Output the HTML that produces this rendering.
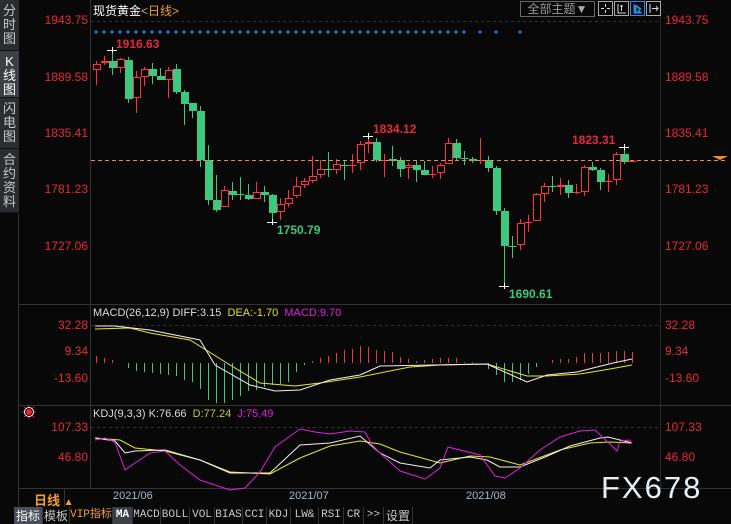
<!DOCTYPE html>
<html><head><meta charset="utf-8"><style>
body{margin:0;width:731px;height:524px;background:#080808;overflow:hidden;position:relative;font-family:"Liberation Sans","Noto Sans CJK SC",sans-serif}
.side{position:absolute;left:0;width:19px;background:#2b2c30;color:#c8c8c8;font-size:13px;line-height:14px;text-align:center;box-sizing:border-box;padding-top:4px;border-bottom:1px solid #111}
.lab{position:absolute;font-size:12px;color:#e8283a}
.ll{right:643px;text-align:right}
.rl{left:665px}
.tab{position:absolute;top:507px;height:17px;font-family:"Liberation Mono","Noto Sans CJK SC",monospace;font-size:11px;color:#c8c8c8;text-align:center;line-height:17px;border-right:1px solid #333;box-sizing:border-box}
</style></head><body>
<div class="side" style="top:0;height:51px">分<br>时<br>图</div>
<div class="side" style="top:51px;height:47px;background:#3d3f45;color:#fff">K<br>线<br>图</div>
<div class="side" style="top:98px;height:51px">闪<br>电<br>图</div>
<div class="side" style="top:149px;height:64px">合<br>约<br>资<br>料</div>
<div style="position:absolute;left:0;top:213px;width:19px;height:294px;border-right:1px solid #333;box-sizing:border-box"></div>
<div style="position:absolute;left:90px;top:0;width:1px;height:488px;background:#333"></div>
<div style="position:absolute;left:660px;top:0;width:1px;height:488px;background:#2a2a2a"></div>
<div style="position:absolute;left:19px;top:304px;width:712px;height:1px;background:#333"></div>
<div style="position:absolute;left:19px;top:405px;width:712px;height:1px;background:#333"></div>
<div style="position:absolute;left:19px;top:488px;width:712px;height:1px;background:#333"></div>
<div style="position:absolute;left:64px;top:488px;width:1px;height:19px;background:#333"></div>

<div style="position:absolute;left:93px;top:2px;font-size:12px;color:#fff">现货黄金<span style="color:#f0a030">&lt;日线&gt;</span></div>
<div style="position:absolute;left:520px;top:1px;width:73px;height:14px;border:1px solid #666;color:#999;font-size:12px;line-height:14px;text-align:center">全部主题<span style="color:#aaa">▼</span></div>
<svg style="position:absolute;left:598px;top:1px" width="64" height="16">
<rect x="0.5" y="0.5" width="14" height="14" fill="none" stroke="#aaa"/><path d="M7.5 3v3M7.5 9v3M3 7.5h3M9 7.5h3" stroke="#ddd"/>
<rect x="16.5" y="0.5" width="14" height="14" fill="none" stroke="#aaa"/><path d="M20 3v9h8M22 5h3M23.5 4v6" stroke="#ddd"/>
<rect x="32.5" y="0.5" width="14" height="14" fill="none" stroke="#2b8be0"/><path d="M36 3v9h8M38 4l5 4-5 4z" stroke="#2b8be0" fill="#2b8be0"/>
<rect x="48.5" y="0.5" width="14" height="14" fill="none" stroke="#aaa"/><path d="M52 3v9M54 7.5h6M58 5l2 2.5-2 2.5" stroke="#ddd"/>
</svg>

<svg id="ch" style="position:absolute;left:0;top:0" width="731" height="524"></svg>

<div class="lab ll" style="top:13px">1943.75</div><div class="lab rl" style="top:13px">1943.75</div>
<div class="lab ll" style="top:70px">1889.58</div><div class="lab rl" style="top:70px">1889.58</div>
<div class="lab ll" style="top:126px">1835.41</div><div class="lab rl" style="top:126px">1835.41</div>
<div class="lab ll" style="top:182px">1781.23</div><div class="lab rl" style="top:182px">1781.23</div>
<div class="lab ll" style="top:239px">1727.06</div><div class="lab rl" style="top:239px">1727.06</div>
<div class="lab ll" style="top:318px">32.28</div><div class="lab rl" style="top:318px">32.28</div>
<div class="lab ll" style="top:344px">9.34</div><div class="lab rl" style="top:344px">9.34</div>
<div class="lab ll" style="top:371px">-13.60</div><div class="lab rl" style="top:371px">-13.60</div>
<div class="lab ll" style="top:420px">107.33</div><div class="lab rl" style="top:420px">107.33</div>
<div class="lab ll" style="top:450px">46.80</div><div class="lab rl" style="top:450px">46.80</div>

<div style="position:absolute;left:116px;top:37px;font-size:12px;font-weight:bold;color:#e8283a">1916.63</div>
<div style="position:absolute;left:373px;top:122px;font-size:12px;font-weight:bold;color:#e8283a">1834.12</div>
<div style="position:absolute;left:572px;top:133px;font-size:12px;font-weight:bold;color:#e8283a">1823.31</div>
<div style="position:absolute;left:277px;top:223px;font-size:12px;font-weight:bold;color:#3cc87e">1750.79</div>
<div style="position:absolute;left:509px;top:287px;font-size:12px;font-weight:bold;color:#3cc87e">1690.61</div>

<div style="position:absolute;left:93px;top:307px;font-size:11px;color:#ddd">MACD(26,12,9) DIFF:3.15 &nbsp;<span style="color:#e0e020">DEA:-1.70</span> &nbsp;<span style="color:#e020e0">MACD:9.70</span></div>
<div style="position:absolute;left:93px;top:408px;font-size:11px;color:#ddd">KDJ(9,3,3) K:76.66 &nbsp;<span style="color:#c0d020">D:77.24</span> &nbsp;<span style="color:#e020e0">J:75.49</span></div>
<svg style="position:absolute;left:22px;top:405px" width="14" height="14"><circle cx="7" cy="7" r="3" fill="#f22"/><circle cx="7" cy="7" r="4.5" fill="none" stroke="#fff" stroke-width="1"/><path d="M7 0v1.5M7 12.5v1.5M0 7h1.5M12.5 7h1.5M2 2l1 1M11 11l1 1M12 2l-1 1M2 12l1-1" stroke="#f22"/></svg>

<div style="position:absolute;left:34px;top:490px;font-size:13px;font-weight:bold;color:#f0a030">日线 <span style="font-size:10px">▲</span></div>
<div style="position:absolute;left:113px;top:490px;font-size:11px;color:#a8b8c8">2021/06</div>
<div style="position:absolute;left:289px;top:490px;font-size:11px;color:#a8b8c8">2021/07</div>
<div style="position:absolute;left:466px;top:490px;font-size:11px;color:#a8b8c8">2021/08</div>
<div style="position:absolute;left:601px;top:470px;font-size:31px;color:#e8eef4;letter-spacing:2px">FX678</div>

<div class="tab" style="left:14px;width:29px;background:#4a4e58;color:#fff;font-family:'Noto Sans CJK SC',sans-serif;font-size:12px">指标</div>
<div class="tab" style="left:43px;width:27px;font-family:'Noto Sans CJK SC',sans-serif;font-size:12px">模板</div>
<div class="tab" style="left:70px;width:43px;color:#f0a030">VIP指标</div>
<div class="tab" style="left:113px;width:20px;background:#3d3f45;color:#fff;font-weight:bold">MA</div>
<div class="tab" style="left:133px;width:28px">MACD</div>
<div class="tab" style="left:161px;width:29px">BOLL</div>
<div class="tab" style="left:190px;width:25px">VOL</div>
<div class="tab" style="left:215px;width:28px">BIAS</div>
<div class="tab" style="left:243px;width:24px">CCI</div>
<div class="tab" style="left:267px;width:24px">KDJ</div>
<div class="tab" style="left:291px;width:28px">LW&amp;</div>
<div class="tab" style="left:319px;width:25px">RSI</div>
<div class="tab" style="left:344px;width:20px">CR</div>
<div class="tab" style="left:364px;width:20px">&gt;&gt;</div>
<div class="tab" style="left:384px;width:29px;font-family:'Noto Sans CJK SC',sans-serif;font-size:12px">设置</div>

<script>
var C=[[64,70,61,85,1],[61,63,56,65,1],[61,68,50,75,0],[59,68,58,73,1],[60,99,57,103,0],[77,98,71,113,1],[69,77,67,86,1],[69,76,63,84,0],[76,80,68,80,0],[70,80,67,98,1],[69,92,64,94,0],[92,104,90,125,0],[103,111,103,118,0],[111,160,106,167,0],[160,200,145,205,0],[200,210,175,212,0],[190,207,186,207,1],[191,195,182,200,0],[194,194,177,200,0],[195,199,184,200,0],[192,199,182,199,1],[192,195,186,202,0],[195,213,194,222,0],[204,212,198,220,1],[198,204,190,207,1],[186,196,177,198,1],[181,185,178,188,1],[176,181,156,183,1],[169,175,160,178,1],[169,169,152,177,0],[164,170,159,174,1],[165,165,161,180,0],[165,165,154,173,1],[144,163,141,170,1],[142,144,137,153,1],[142,160,138,162,0],[160,160,154,177,1],[159,161,146,166,0],[160,169,157,177,0],[165,168,163,179,1],[165,170,161,182,0],[170,175,161,175,0],[174,174,166,178,1],[165,173,163,179,1],[143,164,138,164,1],[143,158,139,160,0],[158,158,151,165,0],[159,161,157,163,0],[160,160,138,164,1],[160,168,156,172,0],[168,211,166,215,0],[211,246,208,286,0],[246,246,236,258,0],[223,245,219,250,1],[222,222,215,232,1],[194,221,193,221,1],[186,194,183,202,1],[186,186,176,192,0],[185,187,178,195,1],[185,193,180,198,0],[192,192,184,194,1],[167,192,165,196,1],[167,170,162,171,0],[170,182,168,190,0],[181,181,174,192,1],[154,180,152,185,1],[154,162,147,164,0],[161,161,161,161,1]];
var s='';
function ln(x1,y1,x2,y2,c,d){s+='<line x1="'+x1+'" y1="'+y1+'" x2="'+x2+'" y2="'+y2+'" stroke="'+c+'"'+(d?' stroke-dasharray="'+d+'"':'')+'/>';}
[21,325,427].forEach(function(y){ln(91,y+.5,660,y+.5,'#333','3,3');});
for(var x=96;x<=464;x+=8)s+='<circle cx="'+x+'" cy="32" r="1.6" fill="#2080d8"/>';
[480,496,520].forEach(function(x){s+='<circle cx="'+x+'" cy="32" r="1.6" fill="#2080d8"/>';});
C.forEach(function(c,i){var x=96+8*i,col=c[4]?'#ff3048':'#3cc87e';
ln(x+.5,c[2],x+.5,c[3],col);
var t=Math.min(c[0],c[1]),h=Math.abs(c[1]-c[0]);
if(h<2){ln(x-3.5,t+.5,x+4.5,t+.5,col);}
else if(c[4])s+='<rect x="'+(x-3)+'.5" y="'+(t+.5)+'" width="7" height="'+(h-1)+'" fill="#080808" stroke="'+col+'"/>';
else s+='<rect x="'+(x-3)+'" y="'+t+'" width="8" height="'+h+'" fill="'+col+'"/>';});
ln(91,160.5,728,160.5,'#f09020','4,3');
s+='<path d="M712 156h16l-8 4z" fill="#f09020"/>';
[[112,50],[368,136],[624,147],[272,222],[504,286]].forEach(function(p){ln(p[0]-5,p[1]+.5,p[0]+5,p[1]+.5,'#fff');ln(p[0]+.5,p[1]-3,p[0]+.5,p[1]+3,'#fff');});
var H=[356,358,360,363,368,371,372,373,374,375,376,380,382,389,400,403,403,400,396,391,390,387,385,384,382,372,365,361,358,356,353,350,349,346,347,350,351,352,357,359,361,360,359,358,358,358,362,362,363,369,375,382,382,380,374,367,363,360,359,359,357,353,353,353,352,351,351,352];
H.forEach(function(h,i){var x=96+8*i+.5;ln(x,363,x,h,h<363?'#e04050':'#50c080');});
function pl(p,c){s+='<polyline fill="none" stroke="'+c+'" points="'+p+'"/>';}
pl('95,329 130,328 150,333 190,340 230,365 260,383 295,386 320,383 360,377 410,367 440,365 487,364 527,376 547,376 580,374 610,369 632,365','#e8e820');
pl('95,326 115,326 150,330 200,340 215,365 250,385 275,391 300,390 330,380 360,375 380,366 487,364 527,382 547,375 577,372 597,367 613,363 632,359','#f0f0f0');
pl('95,438 120,440 135,448 165,451 200,460 230,472 270,474 300,458 330,446 360,441 380,444 400,452 440,463 470,456 490,457 520,465 560,450 590,443 610,442 632,443','#e8e820');
pl('95,438 115,441 125,453 135,451 165,450 200,460 230,473 270,473 300,445 330,443 360,436 380,453 400,463 430,468 440,460 470,457 487,460 500,467 520,467 545,457 570,446 600,438 608,437 620,440 632,443','#f0f0f0');
pl('95,440 105,438 115,442 125,470 135,463 150,453 165,451 180,465 200,480 230,490 245,488 260,472 275,447 300,429 315,432 330,434 350,431 365,432 372,445 380,453 400,471 425,479 440,468 448,447 480,455 495,476 505,478 520,468 540,450 560,437 580,431 595,430 610,444 617,451 620,441 630,440 632,444','#e020e0');
document.getElementById('ch').innerHTML=s;
</script>
</body></html>
